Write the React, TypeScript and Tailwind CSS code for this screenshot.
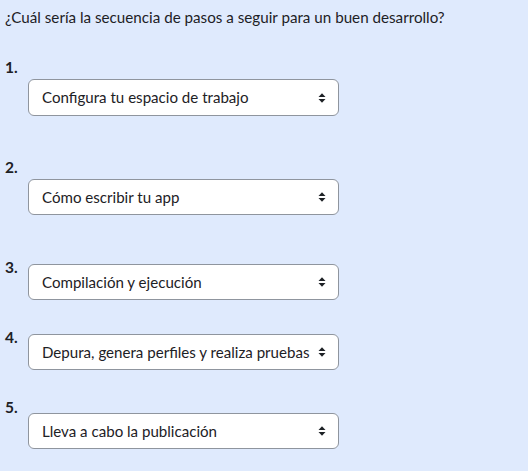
import React from "react";

const Caret = () => (
  <svg width="8" height="12" viewBox="0 0 8 12" className="shrink-0">
    <path d="M0.5 5 L4 1.2 L7.5 5 Z" fill="#1d2125" />
    <path d="M0.5 7 L4 10.8 L7.5 7 Z" fill="#1d2125" />
  </svg>
);

const Select = ({ text, className = "" }: { text: string; className?: string }) => (
  <div
    className={`w-[311px] h-[36px] shrink-0 rounded-[6px] border border-[#8f959e] bg-white flex items-center justify-between pl-[13px] pr-[12px] text-[15.1px] text-[#1d2125] ${className}`}
  >
    <span className="whitespace-nowrap">{text}</span>
    <Caret />
  </div>
);

const Label = ({ n, className = "" }: { n: string; className?: string }) => (
  <div className={`text-[15.5px] leading-[22px] font-bold text-[#1d2125] ${className}`}>{n}</div>
);

export default function App() {
  return (
    <div
      className="w-[528px] h-[471px] overflow-hidden bg-[#dfeafd] px-[5px]"
      style={{ fontFamily: "Lato, 'Liberation Sans', sans-serif" }}
    >
      <div className="pt-[6px] text-[15.2px] leading-[22px] text-[#1d2125] whitespace-nowrap">
        ¿Cuál sería la secuencia de pasos a seguir para un buen desarrollo?
      </div>

      <div className="mt-[28px] flex flex-col">
        <Label n="1." />
        <Select text="Configura tu espacio de trabajo" className="ml-[23px] mt-[1px] h-[37px]" />
      </div>

      <div className="mt-[40px] flex flex-col">
        <Label n="2." />
        <Select text="Cómo escribir tu app" className="ml-[23px] mt-[1px]" />
      </div>

      <div className="mt-[41px] flex items-start">
        <Label n="3." className="w-[23px] shrink-0" />
        <Select text="Compilación y ejecución" className="mt-[8px]" />
      </div>

      <div className="mt-[26px] flex items-start">
        <Label n="4." className="w-[23px] shrink-0" />
        <Select text="Depura, genera perfiles y realiza pruebas" className="mt-[8px]" />
      </div>

      <div className="mt-[26px] flex flex-col">
        <Label n="5." />
        <Select text="Lleva a cabo la publicación" className="ml-[23px] mt-[-5px]" />
      </div>
    </div>
  );
}
